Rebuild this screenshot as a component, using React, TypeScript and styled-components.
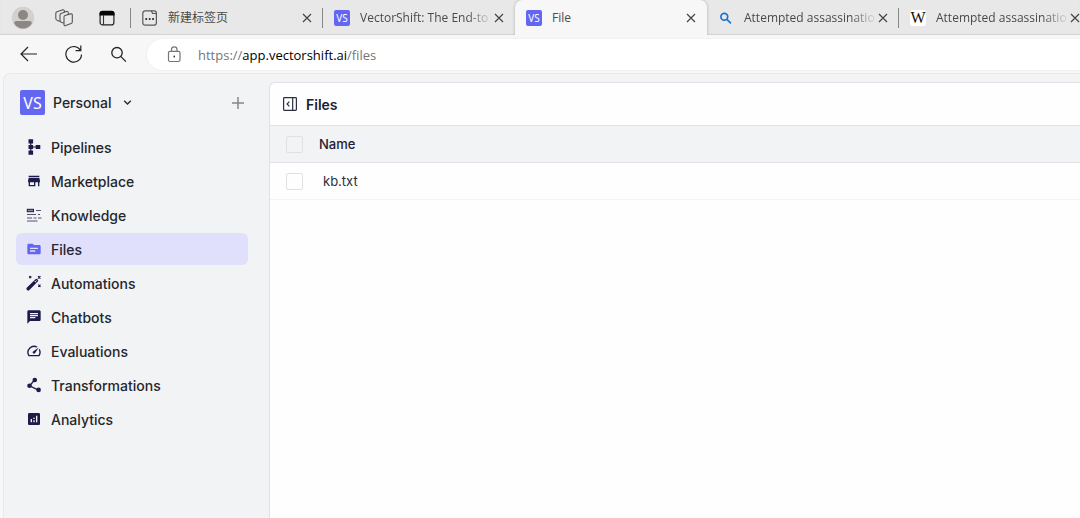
import React from "react";
import styled, { createGlobalStyle } from "styled-components";
import { MdStore, MdTopic, MdChat, MdSpeed, MdAnalytics } from "react-icons/md";

const GlobalStyle = createGlobalStyle`
  *, *::before, *::after { box-sizing: border-box; }
  body {
    margin: 0;
    background: #f7f7f7;
    overflow: hidden;
    font-family: Inter, "Liberation Sans", sans-serif;
  }
  button { font: inherit; color: inherit; border: 0; padding: 0; background: none; cursor: pointer; }
`;

const Browser = styled.div`
  display: flex;
  flex-direction: column;
  min-height: 100vh;
  background: #f7f7f7;
`;

/* Tab strip */

const TabStrip = styled.header`
  display: flex;
  height: 35px;
  background: #e8e8e8;
  box-shadow: inset 0 -1px 1px #d2d2d2;
  overflow: hidden;
  font-family: "Open Sans", "Noto Sans CJK SC", sans-serif;
  font-size: 12px;
  color: #4a4a4a;
`;

const StripTools = styled.div`
  display: flex;
  flex: none;
  align-items: center;
  width: 131px;
  padding-left: 11px;
  gap: 18px;
`;

const StripButton = styled.button`
  display: grid;
  place-items: center;
  width: 24px;
  height: 24px;
`;

const Tab = styled.div<{ $active?: boolean; $divided?: boolean }>`
  display: flex;
  flex: none;
  width: 192px;
  align-items: center;
  position: relative;
  padding: 0 10px 0 11px;
  border-radius: ${(p) => (p.$active ? "7px 7px 0 0" : "0")};
  background: ${(p) => (p.$active ? "#f7f7f7" : "transparent")};
  box-shadow: ${(p) => (p.$active ? "0 0 3px #a8a8a8" : "none")};

  &::before {
    content: "";
    display: ${(p) => (p.$divided ? "block" : "none")};
    position: absolute;
    left: -1px;
    top: 8px;
    width: 1px;
    height: 20px;
    background: #868686;
  }
`;

const TabTitle = styled.span<{ $faded?: boolean }>`
  flex: 1;
  min-width: 0;
  margin-left: 10px;
  overflow: hidden;
  white-space: nowrap;
  line-height: 20px;
  mask-image: ${(p) => (p.$faded ? "linear-gradient(to right, #000 80%, transparent)" : "none")};
`;

const CloseButton = styled.button`
  display: grid;
  flex: none;
  place-items: center;
  width: 12px;
  height: 20px;
`;

const Logo = styled.span<{ $large?: boolean }>`
  display: grid;
  flex: none;
  place-items: center;
  width: ${(p) => (p.$large ? "25px" : "16px")};
  height: ${(p) => (p.$large ? "25px" : "16px")};
  border-radius: 2px;
  background: #6366f1;
  color: #fff;
  font-family: "Noto Sans", sans-serif;
  font-size: ${(p) => (p.$large ? "16px" : "10px")};
  font-weight: 400;
  line-height: 1;
`;

const WikiIcon = styled.span`
  display: grid;
  flex: none;
  place-items: center;
  width: 16px;
  height: 16px;
  border-radius: 3px;
  background: #fff;
  color: #111;
  font-family: "Liberation Serif", serif;
  font-size: 16px;
  line-height: 1;
`;

/* Navigation bar */

const NavBar = styled.div`
  display: flex;
  align-items: center;
  height: 38px;
  padding-left: 18px;
`;

const NavButton = styled.button`
  display: grid;
  place-items: center;
  width: 20px;
  height: 20px;
  margin-right: 25px;
`;

const AddressBar = styled.form`
  display: flex;
  flex: 1;
  align-items: center;
  gap: 16px;
  height: 31px;
  margin: 1px 0 0 -6px;
  padding-left: 19px;
  border-radius: 16px 0 0 16px;
  background: #fff;
  box-shadow: 0 0 2px #e4e4e4;
`;

const Address = styled.a`
  font-family: "Open Sans", sans-serif;
  font-size: 13px;
  line-height: 20px;
  color: #767676;
  text-decoration: none;

  b { font-weight: 400; color: #000; }
`;

/* Application */

const Application = styled.div`
  display: flex;
  flex: 1;
  margin-left: 3px;
  border: 1px solid #e9e9eb;
  border-width: 1px 0 0 1px;
  border-radius: 8px 0 0 0;
  background: #f1f3f5;
`;

const Sidebar = styled.aside`
  flex: none;
  width: 265px;
  padding: 16px 21px 0 12px;
  color: #25272d;
  font-size: 14px;
  font-weight: 500;
`;

const Workspace = styled.div`
  display: flex;
  align-items: center;
  justify-content: space-between;
  height: 25px;
  padding: 0 4px;
`;

const WorkspaceButton = styled.button`
  display: flex;
  align-items: center;
  gap: 8px;

  svg { margin-left: 4px; }
`;

const Menu = styled.nav`
  display: flex;
  flex-direction: column;
  gap: 2px;
  margin-top: 16px;
`;

const MenuLink = styled.a<{ $active?: boolean }>`
  display: flex;
  align-items: center;
  gap: 9px;
  height: 32px;
  padding-left: 10px;
  border-radius: 6px;
  background: ${(p) => (p.$active ? "#e0dffc" : "transparent")};
  color: inherit;
  text-decoration: none;

  svg { flex: none; color: ${(p) => (p.$active ? "#6366f1" : "#1e1b4b")}; }
`;

const Panel = styled.main`
  flex: 1;
  margin-top: 8px;
  border: 1px solid #dfe1e6;
  border-width: 1px 0 0 1px;
  border-radius: 6px 0 0 0;
  background: #fefefe;
  overflow: hidden;
  color: #1b2133;
`;

const PanelHeader = styled.div`
  display: flex;
  align-items: center;
  gap: 9px;
  height: 42px;
  padding-left: 13px;
`;

const PanelTitle = styled.h1`
  margin: 0;
  font-size: 14px;
  font-weight: 600;
`;

const CollapseButton = styled.button`
  display: grid;
  width: 14px;
  height: 14px;
`;

const FileTable = styled.table`
  width: 100%;
  border-collapse: collapse;
  text-align: left;
`;

const HeadCell = styled.th<{ $check?: boolean }>`
  width: ${(p) => (p.$check ? "49px" : "auto")};
  height: 37px;
  padding: 0 0 0 ${(p) => (p.$check ? "16px" : "0")};
  border: 1px solid #dfe1e6;
  border-width: 1px 0;
  background: #f1f3f5;
  font-size: 13px;
  font-weight: 500;
`;

const Cell = styled.td<{ $check?: boolean }>`
  height: 37px;
  padding: 0 0 0 ${(p) => (p.$check ? "16px" : "4px")};
  border-bottom: 1px solid #f2f3f5;
  font-size: 13px;
  color: #2b2f3c;
`;

const Checkbox = styled.input`
  display: block;
  appearance: none;
  width: 17px;
  height: 17px;
  margin: 0;
  border: 1px solid #dfe1e4;
  border-radius: 2px;
`;

const CloseIcon = () => (
  <svg width="10" height="10" viewBox="0 0 10 10" fill="none" stroke="#444" strokeWidth="1.2">
    <path d="M1 1l8 8M9 1L1 9" />
  </svg>
);

const ProfileIcon = () => (
  <svg width="24" height="24" viewBox="0 0 24 24">
    <circle cx="12" cy="12" r="11.2" fill="#d3d1ce" />
    <circle cx="12" cy="9" r="5" fill="#8b8783" />
    <path d="M3.2 17.2c0-1.5 1-2.2 2.4-2.2h12.8c1.4 0 2.4.7 2.4 2.2-1.7 3.2-4.900 5.300-8.800 5.300s-7.100-2.100-8.800-5.300z" fill="#8b8783" />
  </svg>
);

const WorkspacesIcon = () => (
  <svg width="20" height="20" viewBox="0 0 20 20" fill="none" stroke="#555" strokeWidth="1.1" strokeLinejoin="round">
    <path d="M10 7.500l5.500-1.600q1.800-.4 1.800 1.200v6.900q0 1.200-1.200 1.600l-5.300 2q-1.800.4-1.800-1.200V9q0-1.200 1-1.500z" />
    <path d="M9 15l-2.300-.5q-1.700-.4-1.700-1.900V7q0-1.200 1-1.600L11.300 3.500q1.900-.5 2 1.500v1.500" />
    <path d="M5 13.200l-2.300-.6Q.8 12 .8 10.500V5.500q0-1.400 1.200-1.800L7.200 1.900q1.800-.5 2.200 1v1.300" />
  </svg>
);

const TabActionsIcon = () => (
  <svg width="16" height="16" viewBox="0 0 16 16">
    <rect x="1.1" y="1.600" width="13.800" height="13.300" rx="2.500" fill="none" stroke="#222" strokeWidth="1.200" />
    <path d="M.5 5.500V3.500q0-2.800 2.800-2.800h9.400q2.800 0 2.800 2.800v2z" fill="#050505" />
    <path d="M4.500 5v10" stroke="#333" strokeWidth="1.100" />
  </svg>
);

const NewTabIcon = () => (
  <svg width="16" height="16" viewBox="0 0 16 16" fill="none" stroke="#5a5a5a" strokeWidth="1.200">
    <path d="M3.300.8h5.200q.8 0 1.200.8l.9 1.900h3.800v9.200q0 2.500-2.500 2.500H3.300Q.8 15.200.8 12.700V3.300Q.8.8 3.300.8z" />
    <path d="M9 .8h3.200q2.200 0 2.200 2.500v1" />
    <path d="M3.400 9h1.700M6.800 9h1.700M10.200 9h1.700" stroke="#333" strokeWidth="1.800" />
  </svg>
);

const SearchTabIcon = () => (
  <svg width="16" height="16" viewBox="0 0 16 16" fill="none" stroke="#1f76c9" strokeWidth="1.700">
    <circle cx="6.300" cy="6.800" r="3.400" />
    <path d="M8.700 9.200l4.200 4.100" />
  </svg>
);

const BackIcon = () => (
  <svg width="20" height="20" viewBox="0 0 20 20" fill="none" stroke="#222" strokeWidth="1.200">
    <path d="M10 3L3 10l7 7M3 10h16" />
  </svg>
);

const ReloadIcon = () => (
  <svg width="20" height="20" viewBox="0 0 20 20" fill="none" stroke="#222" strokeWidth="1.200">
    <path d="M17.500 6.500A7.800 7.800 0 1 0 18.500 10.500M17.800 1.500v5.200h-5.200" />
  </svg>
);

const SearchIcon = () => (
  <svg width="20" height="20" viewBox="0 0 20 20" fill="none" stroke="#222" strokeWidth="1.300">
    <circle cx="9" cy="8.700" r="5.200" />
    <path d="M12.700 12.400l5.200 5.200" />
  </svg>
);

const LockIcon = () => (
  <svg width="16" height="18" viewBox="0 0 16 18" fill="none" stroke="#757575" strokeWidth="1.200">
    <rect x="2.500" y="5.300" width="11.500" height="10.200" rx="1.500" />
    <path d="M5.500 5.300V3.500q0-2.600 2.750-2.600t2.750 2.600v1.800" />
    <circle cx="8.200" cy="10.500" r=".9" fill="#444" stroke="none" />
  </svg>
);

const ChevronIcon = () => (
  <svg width="9" height="7" viewBox="0 0 9 7" fill="none" stroke="#2a2c33" strokeWidth="1.400">
    <path d="M1.200 1.700l3.300 3.200 3.300-3.200" />
  </svg>
);

const PlusIcon = () => (
  <svg width="12" height="12" viewBox="0 0 12 12" fill="none" stroke="#85878c" strokeWidth="1.500">
    <path d="M6 0v12M0 6h12" />
  </svg>
);

const CollapseIcon = () => (
  <svg width="14" height="14" viewBox="0 0 14 14" fill="none" stroke="#2b3042" strokeWidth="1.200">
    <rect x=".6" y=".6" width="12.800" height="12.800" rx=".8" />
    <path d="M9.700.6v12.800M6.300 4.700L4.100 7l2.200 2.300" />
  </svg>
);

const PipelinesIcon = () => (
  <svg width="16" height="16" viewBox="0 0 16 16" fill="currentColor">
    <path d="M2.500.3h4.600v4.200H2.500zM2.500 5.900h4.600v4.200H2.500zM2.500 11.500h4.600v4.200H2.500zM9.700 5.900h4.600v4.200H9.700z" />
    <path d="M4.200 3h1.200v10H4.200zM6 7.400h5v1.200H6z" />
  </svg>
);

const KnowledgeIcon = () => (
  <svg width="16" height="16" viewBox="0 0 16 16" fill="none" stroke="currentColor">
    <rect x="1.300" y="2.300" width="6.200" height="2.400" fill="#8b8aa3" strokeWidth="1" />
    <path d="M10 3.500h5M1 7.500h9M12 7.500h2M1 11h5M7.500 11h3M12 11h3.500M1 14h10.500" strokeWidth="1" opacity=".75" />
  </svg>
);

const WandIcon = () => (
  <svg width="16" height="16" viewBox="0 0 16 16" fill="none" stroke="currentColor">
    <path d="M2.200 13.800l8.200-8.200" strokeWidth="3.400" strokeLinecap="round" />
    <path d="M8.600 5.900l1.500 1.500M9.300 6.600l1.200-1.200" stroke="#f1f3f5" strokeWidth=".9" />
    <path d="M3.200 1.200l2 2M5.200 1.200l-2 2M12 1.200l2.400 2.400M14.400 1.200L12 3.600M12.300 9.600l2.200 2.200M14.500 9.600l-2.200 2.200" strokeWidth="1.100" />
  </svg>
);

const TransformIcon = () => (
  <svg width="16" height="16" viewBox="0 0 16 16" fill="currentColor">
    <path d="M8.500 3L3.700 8.800l8.600 4.300" fill="none" stroke="currentColor" strokeWidth="1.300" />
    <circle cx="8.800" cy="3" r="2.300" />
    <circle cx="3.500" cy="8.700" r="2.300" />
    <circle cx="12.600" cy="12.900" r="2.300" />
  </svg>
);

type TabData = { title: string; icon: React.ReactNode; active?: boolean; divided?: boolean; faded?: boolean };

const tabs: TabData[] = [
  { title: "新建标签页", icon: <NewTabIcon />, divided: true },
  { title: "VectorShift: The End-to", icon: <Logo>VS</Logo>, divided: true, faded: true },
  { title: "File", icon: <Logo>VS</Logo>, active: true },
  { title: "Attempted assassinatio", icon: <SearchTabIcon />, faded: true },
  { title: "Attempted assassinatio", icon: <WikiIcon>W</WikiIcon>, divided: true, faded: true },
];

const menu = [
  { label: "Pipelines", icon: <PipelinesIcon /> },
  { label: "Marketplace", icon: <MdStore size={16} /> },
  { label: "Knowledge", icon: <KnowledgeIcon /> },
  { label: "Files", icon: <MdTopic size={16} />, active: true },
  { label: "Automations", icon: <WandIcon /> },
  { label: "Chatbots", icon: <MdChat size={16} /> },
  { label: "Evaluations", icon: <MdSpeed size={16} /> },
  { label: "Transformations", icon: <TransformIcon /> },
  { label: "Analytics", icon: <MdAnalytics size={16} /> },
];

export default function App() {
  return (
    <Browser>
      <GlobalStyle />
      <TabStrip>
        <StripTools>
          <StripButton aria-label="Profile"><ProfileIcon /></StripButton>
          <StripButton aria-label="Workspaces"><WorkspacesIcon /></StripButton>
          <StripButton aria-label="Tab actions"><TabActionsIcon /></StripButton>
        </StripTools>
        {tabs.map((tab, i) => (
          <Tab key={i} $active={tab.active} $divided={tab.divided}>
            {tab.icon}
            <TabTitle $faded={tab.faded}>{tab.title}</TabTitle>
            <CloseButton aria-label="Close tab"><CloseIcon /></CloseButton>
          </Tab>
        ))}
      </TabStrip>
      <NavBar>
        <NavButton aria-label="Back"><BackIcon /></NavButton>
        <NavButton aria-label="Reload"><ReloadIcon /></NavButton>
        <NavButton aria-label="Search"><SearchIcon /></NavButton>
        <AddressBar>
          <LockIcon />
          <Address href="#files">https://<b>app.vectorshift.ai</b>/files</Address>
        </AddressBar>
      </NavBar>
      <Application>
        <Sidebar>
          <Workspace>
            <WorkspaceButton>
              <Logo $large>VS</Logo>
              Personal
              <ChevronIcon />
            </WorkspaceButton>
            <CloseButton aria-label="Add"><PlusIcon /></CloseButton>
          </Workspace>
          <Menu>
            {menu.map((item) => (
              <MenuLink key={item.label} href={`#${item.label}`} $active={item.active}>
                {item.icon}
                {item.label}
              </MenuLink>
            ))}
          </Menu>
        </Sidebar>
        <Panel>
          <PanelHeader>
            <CollapseButton aria-label="Collapse sidebar"><CollapseIcon /></CollapseButton>
            <PanelTitle>Files</PanelTitle>
          </PanelHeader>
          <FileTable>
            <thead>
              <tr>
                <HeadCell $check><Checkbox type="checkbox" aria-label="Select all files" /></HeadCell>
                <HeadCell>Name</HeadCell>
              </tr>
            </thead>
            <tbody>
              <tr>
                <Cell $check><Checkbox type="checkbox" aria-label="Select kb.txt" /></Cell>
                <Cell>kb.txt</Cell>
              </tr>
            </tbody>
          </FileTable>
        </Panel>
      </Application>
    </Browser>
  );
}
